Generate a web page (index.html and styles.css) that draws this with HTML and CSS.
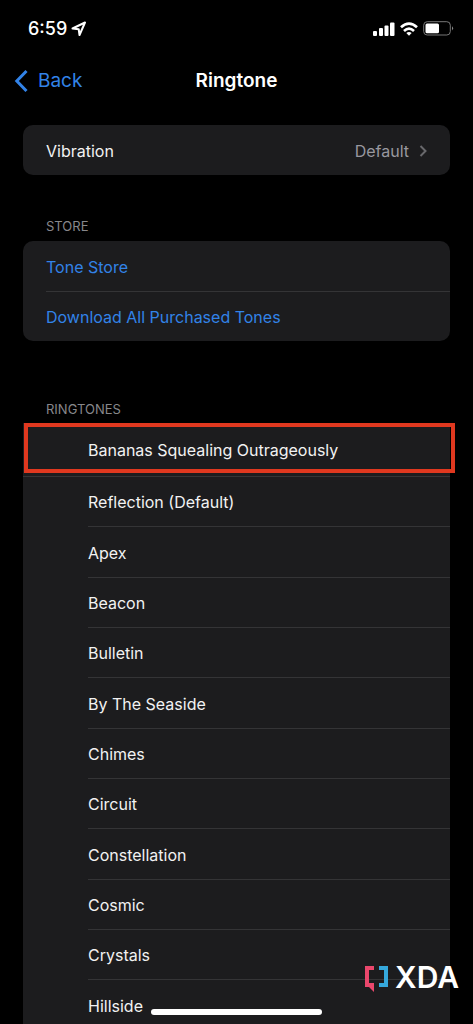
FILE: index.html
```html
<!DOCTYPE html>
<html lang="en">
<head>
<meta charset="utf-8">
<meta name="viewport" content="width=device-width, initial-scale=1">
<title>Ringtone</title>
<link rel="stylesheet" href="styles.css">
</head>
<body>
<div class="screen">
  <header>
    <div class="status">
      <div class="clock">
        <span>6:59</span>
        <svg class="location" viewBox="0 0 16 16" width="16" height="16" aria-hidden="true"><path d="M1.5 7.5 14 1.5 8.5 14 7.7 8.2Z"/></svg>
      </div>
      <div class="indicators">
        <svg viewBox="0 0 22 14" width="22" height="14" fill="#fff" aria-hidden="true"><rect x="0" y="9" width="4" height="5" rx="1"/><rect x="6" y="6" width="4" height="8" rx="1"/><rect x="11.500" y="3.500" width="4" height="10.500" rx="1"/><rect x="17" y="0.500" width="4.500" height="13.500" rx="1"/></svg>
        <svg viewBox="0 0 18 14" width="18" height="14" fill="none" stroke="#fff" stroke-width="2.700" aria-hidden="true"><path d="M1 5.300Q9 -1.900 17 5.300M4 8.900Q9 4.500 14 8.900"/><path d="M6.300 11Q9 8.900 11.700 11L9 13.800Z" fill="#fff" stroke="none"/></svg>
        <svg viewBox="0 0 31 15" width="31" height="15" aria-hidden="true"><rect x="0.700" y="0.700" width="26.600" height="13.300" rx="3.500" fill="none" stroke="#777"/><rect x="2.500" y="2.500" width="13.500" height="9.700" rx="1.500" fill="#fff"/><path d="M29 5.200Q31.200 7.300 29 9.500Z" fill="#888"/></svg>
      </div>
    </div>
    <nav class="navbar">
      <button class="back" type="button">
        <svg viewBox="0 0 14 24" width="14" height="24" aria-hidden="true"><path d="M12.500 2 2.800 12 12.500 22"/></svg>
        <span>Back</span>
      </button>
      <h1>Ringtone</h1>
    </nav>
  </header>
  <main>
    <section class="card">
      <button class="row" type="button">
        <span>Vibration</span>
        <span class="value">Default <svg viewBox="0 0 8 14" width="8" height="14" aria-hidden="true"><path d="M1.500 2 6.500 7 1.500 12"/></svg></span>
      </button>
    </section>
    <h2>STORE</h2>
    <section class="card">
      <button class="row link" type="button">Tone Store</button>
      <button class="row link" type="button">Download All Purchased Tones</button>
    </section>
    <h2 class="tones-title">RINGTONES</h2>
    <section class="tones">
      <button class="tone marked" type="button">Bananas Squealing Outrageously</button>
      <button class="tone" type="button">Reflection (Default)</button>
      <button class="tone" type="button">Apex</button>
      <button class="tone" type="button">Beacon</button>
      <button class="tone" type="button">Bulletin</button>
      <button class="tone" type="button">By The Seaside</button>
      <button class="tone" type="button">Chimes</button>
      <button class="tone" type="button">Circuit</button>
      <button class="tone" type="button">Constellation</button>
      <button class="tone" type="button">Cosmic</button>
      <button class="tone" type="button">Crystals</button>
      <button class="tone" type="button">Hillside</button>
    </section>
  </main>
  <div class="home"></div>
  <div class="brand">
    <svg viewBox="0 0 24 28" width="24" height="28" aria-hidden="true"><path d="M0 0H9V4H4V17H9V26L4 21H0Z" fill="#ea476c"/><path d="M14 0H23V21H14V17H19V4H14Z" fill="#35a8dc"/></svg>
    <span>XDA</span>
  </div>
</div>
</body>
</html>
```
FILE: styles.css
```css
* {
  box-sizing: border-box;
}

body {
  margin: 0;
  background: #000;
  color: #f2f2f2;
  font: 16px/20px Inter, "Liberation Sans", sans-serif;
}

button {
  border: 0;
  padding: 0;
  background: none;
  color: inherit;
  font: inherit;
  text-align: left;
}

h1,
h2 {
  margin: 0;
}

.screen {
  position: relative;
  height: 100vh;
  overflow: hidden;
}

.status {
  display: flex;
  justify-content: space-between;
  align-items: center;
  height: 57px;
  padding: 0 19px 0 28px;
}

.clock {
  display: flex;
  align-items: center;
  gap: 4px;
  color: #fff;
  font-size: 18px;
  font-weight: 500;
}

.location {
  fill: none;
  stroke: #fff;
  stroke-width: 2;
  stroke-linejoin: round;
}

.indicators {
  display: flex;
  align-items: center;
  gap: 5px;
}

.navbar {
  display: grid;
  grid-template-columns: 1fr auto 1fr;
  align-items: center;
  height: 48px;
  padding: 0 14px;
}

.back {
  display: flex;
  align-items: center;
  gap: 10px;
  color: #3283e8;
  font-size: 19px;
}

.back path {
  fill: none;
  stroke: #3283e8;
  stroke-width: 3;
}

h1 {
  color: #fff;
  font-size: 19px;
  font-weight: 600;
}

main {
  padding: 20px 23px 0;
}

.card {
  overflow: hidden;
  border-radius: 10px;
  background: #1c1c1e;
}

.row {
  position: relative;
  display: flex;
  justify-content: space-between;
  align-items: center;
  width: 100%;
  height: 50px;
  padding: 2px 23px 0;
}

.link {
  color: #3283e8;
}

.row + .row::before,
.tone + .tone::before {
  content: "";
  position: absolute;
  top: 0;
  right: 0;
  left: 23px;
  height: 1px;
  background: #343436;
}

.value {
  display: flex;
  align-items: center;
  gap: 10px;
  color: #98989e;
}

.value path {
  fill: none;
  stroke: #68686c;
  stroke-width: 2;
}

h2 {
  padding: 41px 23px 5px;
  color: #87878b;
  font-size: 13px;
  font-weight: 400;
  line-height: 20px;
}

.tones-title {
  padding-top: 58px;
  padding-bottom: 4px;
}

.tones {
  background: #1c1c1e;
}

.tone {
  position: relative;
  display: block;
  width: 100%;
  height: 50px;
  padding: 2px 65px 0;
}

.tone:nth-child(3n) {
  height: 51px;
}

.tone + .tone::before {
  left: 65px;
}

.tone.marked {
  height: 53px;
  padding-top: 0;
}

.tone.marked + .tone::before {
  left: 0;
}

.marked::after {
  content: "";
  position: absolute;
  top: 0;
  right: -5px;
  bottom: 3px;
  left: 1px;
  border: 4px solid #e0381f;
}

.home {
  position: absolute;
  bottom: 9px;
  left: 50%;
  width: 36%;
  height: 6px;
  margin-left: -18%;
  border-radius: 3px;
  background: #fff;
}

.brand {
  position: absolute;
  right: 14px;
  bottom: 30px;
  display: flex;
  align-items: flex-start;
  gap: 6px;
  color: #fff;
  font-size: 30px;
  font-weight: 600;
  line-height: 22px;
}
```
